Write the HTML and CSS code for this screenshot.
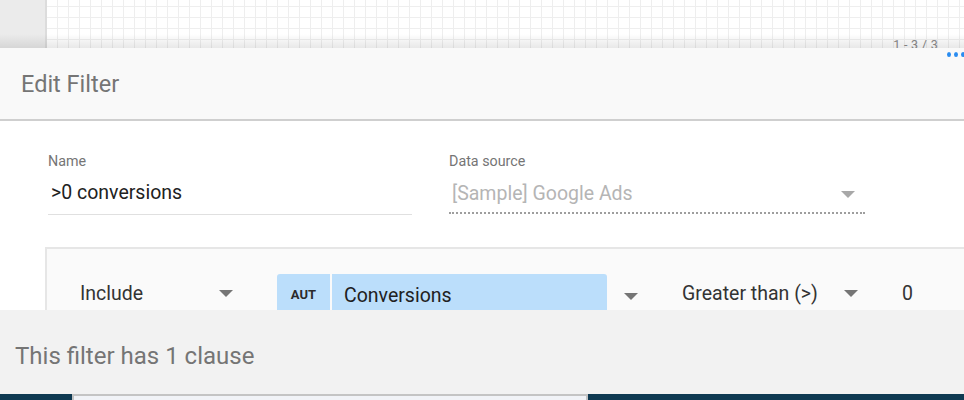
FILE: index.html
```html
<!DOCTYPE html>
<html>
<head>
<meta charset="utf-8">
<link rel="stylesheet" href="styles.css">
</head>
<body>
<div class="page">
  <div class="canvas">
    <div class="gutter"></div>
    <div class="grid"></div>
    <div class="pager">1 - 3 / 3</div>
    <div class="shade"></div>
  </div>
  <div class="dialog">
    <div class="dialog-head">
      <h1 class="title">Edit Filter</h1>
      <div class="dots"><span></span><span></span><span></span></div>
    </div>
    <div class="dialog-body">
      <div class="fields">
        <div class="field field-name">
          <div class="label">Name</div>
          <div class="value">&gt;0 conversions</div>
        </div>
        <div class="field field-source">
          <div class="label">Data source</div>
          <div class="value disabled">
            <span>[Sample] Google Ads</span>
            <span class="caret caret-light"></span>
          </div>
        </div>
      </div>
      <div class="clause">
        <div class="clause-row">
          <div class="select select-include">
            <span>Include</span>
            <span class="caret"></span>
          </div>
          <div class="chip chip-type">AUT</div>
          <div class="chip chip-field">Conversions</div>
          <div class="chip-caret"><span class="caret"></span></div>
          <div class="select select-op">
            <span>Greater than (&gt;)</span>
            <span class="caret"></span>
          </div>
          <div class="operand">0</div>
        </div>
      </div>
    </div>
  </div>
  <div class="footer">This filter has 1 clause</div>
  <div class="strip">
    <div class="strip-left"></div>
    <div class="strip-box"></div>
    <div class="strip-right"></div>
  </div>
</div>
</body>
</html>
```

FILE: styles.css
```css
* { box-sizing: border-box; margin: 0; padding: 0; }
html, body { width: 964px; height: 400px; overflow: hidden; }
body { font-family: Roboto, "Noto Sans", "Liberation Sans", sans-serif; background: #fff; color: #212121; }
.page { display: flex; flex-direction: column; width: 964px; height: 400px; }

.canvas { position: relative; height: 48px; display: flex; overflow: hidden; }
.gutter { width: 47px; background: #ebebeb; border-right: 2px solid #dcdcdc; }
.grid {
  flex: 1;
  background-color: #fff;
  background-image:
    linear-gradient(to right, #eeeeee 1px, transparent 1px),
    linear-gradient(to bottom, #eeeeee 1px, transparent 1px);
  background-size: 11px 11px, 11px 11px;
  background-position: 10px 0, 0 6px;
}
.pager {
  position: absolute; right: 26px; top: 38px;
  font-size: 12.5px; line-height: 14px; color: #8a8a8a; letter-spacing: 0.3px;
}
.shade {
  position: absolute; left: 0; right: 0; bottom: 0; height: 14px;
  background: linear-gradient(to bottom, rgba(0,0,0,0), rgba(0,0,0,0.09));
}

.dialog { height: 262px; overflow: hidden; background: #fff; }
.dialog-head {
  position: relative;
  height: 73px; background: #f9f9f9;
  border-bottom: 2px solid #cfcfcf;
  display: flex; align-items: center; padding-left: 21px;
}
.title { font-size: 23.5px; font-weight: 400; color: #757575; }
.dots { position: absolute; right: -1px; top: 4px; display: flex; gap: 3px; }
.dots span { width: 4px; height: 5px; border-radius: 50%; background: #2a8cf0; }

.dialog-body { padding: 32px 0 0 45px; }
.fields { display: flex; padding-left: 3px; gap: 37px; }
.field { display: flex; flex-direction: column; }
.field-name { width: 364px; }
.field-source { width: 416px; }
.label { font-size: 14.3px; line-height: 17px; color: #757575; }
.value {
  margin-top: 11px; font-size: 19.5px; line-height: 24px;
  padding: 0 0 9px 3px; border-bottom: 1px solid #e0e0e0;
  display: flex; align-items: center; justify-content: space-between;
}
.value.disabled { color: #b5b5b5; border-bottom: 2px dotted #9e9e9e; padding: 1px 0 6px 3px; }
.caret {
  display: inline-block; width: 0; height: 0;
  border-left: 7px solid transparent; border-right: 7px solid transparent;
  border-top: 7px solid #757575;
}
.caret-light { border-top-color: #a8a8a8; margin-right: 10px; }

.clause {
  margin-top: 32px; width: 1000px; height: 120px;
  border: 2px solid #e6e6e6; background: #fafafa;
  padding: 25px 0 0 33px;
}
.clause-row { display: flex; align-items: flex-start; font-size: 19.5px; color: #333; }
.select { display: flex; align-items: center; justify-content: space-between; height: 38px; }
.select-include { width: 154px; margin-right: 43px; }
.select-include .caret { margin-right: 1px; }
.chip { background: #bbdefb; height: 40px; display: flex; align-items: center; }
.chip-type {
  width: 53px; justify-content: center; border-top-left-radius: 3px;
  font-size: 13px; font-weight: 700; color: #2b2b2b; margin-right: 2px;
}
.chip-field { width: 275px; padding-left: 12px; border-top-right-radius: 3px; color: #212121; padding-top: 3px; }
.chip-caret { width: 75px; height: 40px; display: flex; align-items: center; padding-left: 17px; padding-top: 4px; }
.select-op { width: 176px; margin-right: 44px; }
.select-op .caret { margin-right: 0; }
.operand { height: 38px; display: flex; align-items: center; }

.footer {
  height: 84px; background: #f2f2f2; color: #757575;
  font-size: 24px; display: flex; align-items: center; padding: 7px 0 0 15px;
}
.strip { height: 6px; display: flex; }
.strip-left { width: 72px; background: #0f3a52; }
.strip-box { width: 516px; background: #f1f3f7; border-top: 2px solid #c4c4c4; border-left: 2px solid #c4c4c4; border-right: 2px solid #c4c4c4; }
.strip-right { flex: 1; background: #0f3a52; }
```
